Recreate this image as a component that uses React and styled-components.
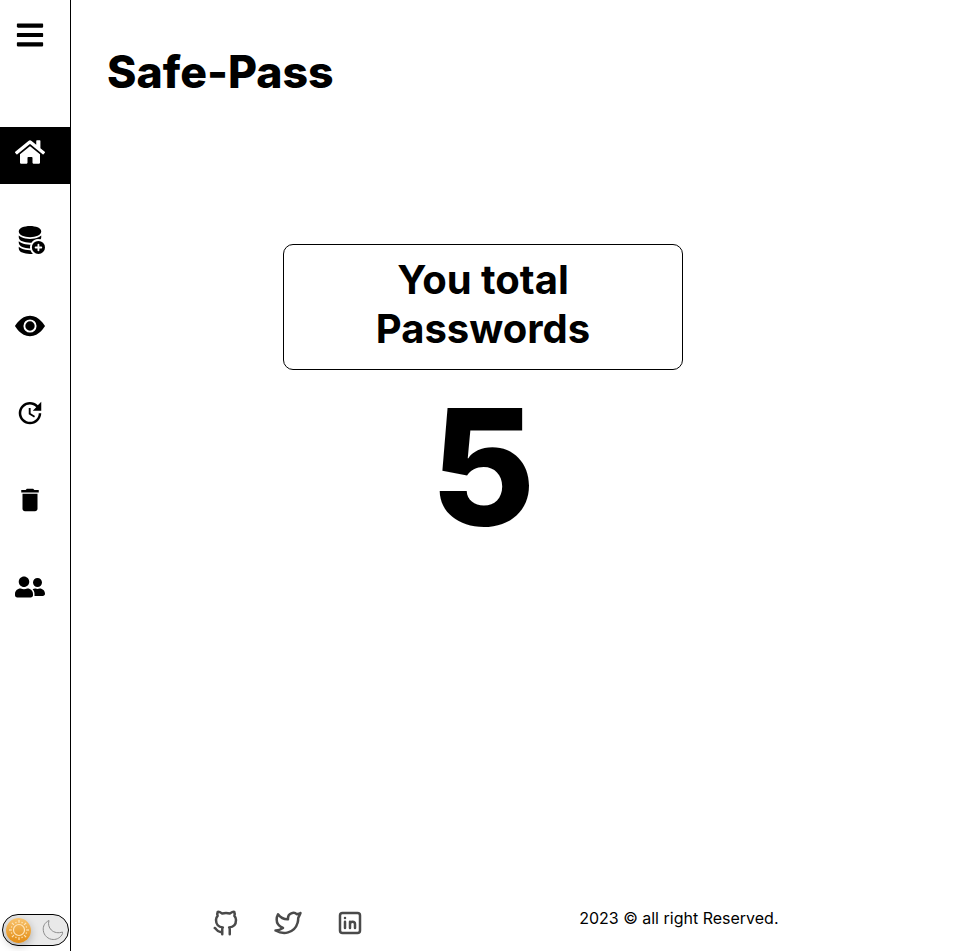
import React from "react";
import styled, { createGlobalStyle } from "styled-components";
import { FaBars, FaHome, FaUserFriends } from "react-icons/fa";
import { BsDatabaseFillAdd, BsEyeFill } from "react-icons/bs";
import { MdDelete, MdUpdate } from "react-icons/md";
import { TbBrandGithub, TbBrandTwitter } from "react-icons/tb";

const GlobalStyle = createGlobalStyle`
  * { box-sizing: border-box; margin: 0; padding: 0; }
  body { background: #fff; color: #000; font-family: Inter, sans-serif; overflow: hidden; }
`;

const Page = styled.div`
  display: flex;
  height: 100vh;
`;

const Sidebar = styled.aside`
  display: flex;
  flex-direction: column;
  flex: none;
  width: 71px;
  border-right: 1px solid #000;
`;

const MenuButton = styled.button`
  display: flex;
  width: 30px;
  height: 30px;
  margin: 20px 0 77px 15px;
  border: 0;
  background: none;
  color: inherit;
`;

const Nav = styled.nav`
  display: flex;
  flex-direction: column;
  gap: 30px;
`;

const NavItem = styled.a`
  display: flex;
  height: 57px;
  padding: 10px 15px;
  background: ${(p) => (p.$active ? "#000" : "transparent")};
  color: ${(p) => (p.$active ? "#fff" : "#000")};
`;

const ThemeToggle = styled.button`
  display: flex;
  align-items: center;
  justify-content: space-between;
  width: 67px;
  height: 32px;
  margin: auto 0 5px 2px;
  padding: 0 4px 0 3px;
  border: 1px solid #000;
  border-radius: 16px;
  background: #e9e9e9;
`;

const SunKnob = styled.span`
  display: flex;
  align-items: center;
  justify-content: center;
  width: 25px;
  height: 25px;
  border-radius: 50%;
  background: linear-gradient(180deg, #f8c36e, #e28c14);
  box-shadow: 0 3px 8px rgba(0, 0, 0, 0.28);
`;

const Main = styled.main`
  display: flex;
  flex-direction: column;
  flex: 1;
`;

const Title = styled.h1`
  margin: 45px 0 0 36px;
  font-size: 44.6px;
  font-weight: 800;
  line-height: 54px;
`;

const Summary = styled.section`
  display: flex;
  flex-direction: column;
  align-items: center;
  width: 400px;
  margin: 145px 0 0 212px;
`;

const SummaryCard = styled.h2`
  width: 400px;
  height: 126px;
  padding: 10px 80px;
  border: 1px solid #000;
  border-radius: 10px;
  font-size: 40px;
  font-weight: 700;
  line-height: 49px;
  text-align: center;
`;

const Count = styled.strong`
  font-size: 161px;
  font-weight: 800;
  line-height: 194px;
`;

const Footer = styled.footer`
  display: flex;
  justify-content: space-between;
  margin-top: auto;
  padding: 0 195.5px 13px 140px;
`;

const Socials = styled.div`
  display: flex;
  gap: 32px;
  color: #4a4a4a;
`;

const Copyright = styled.p`
  font-size: 16px;
  line-height: 20px;
`;

const navIcons = [FaHome, BsDatabaseFillAdd, BsEyeFill, MdUpdate, MdDelete, FaUserFriends];

const rays = Array.from({ length: 16 }, (_, i) => i * 22.5);

function Sun() {
  return (
    <svg width="22" height="22" viewBox="0 0 22 22" fill="none" stroke="#ffe6bd" strokeWidth="1.2">
      <circle cx="11" cy="11" r="5.5" />
      {rays.map((angle, i) => (
        <path key={angle} d={i % 2 ? "M11 3.6V2.4" : "M11 3.8V1"} transform={`rotate(${angle} 11 11)`} />
      ))}
    </svg>
  );
}

function Moon() {
  return (
    <svg width="22" height="22" viewBox="0 0 22 22" fill="none" stroke="#8c8c8c" strokeWidth="1">
      <path d="M7 1.5C2.8 3.5.8 7.1 1.3 11.4c.5 5 4.8 9 9.9 9.1 4 .1 7.6-2.1 9.3-5.8v-1.700c-4 1.400-8.300.8-11.200-2.000C6.800 8.500 5.900 5.300 7 1.500Z" />
    </svg>
  );
}

function LinkedinIcon() {
  return (
    <svg width="30" height="30" viewBox="0 0 24 24" fill="none" stroke="currentColor" strokeWidth="2" strokeLinecap="round" strokeLinejoin="round">
      <rect x="4" y="4" width="16" height="16" rx="2" />
      <path d="M8 11v5M8 8v.01M12 16v-5M16 16v-3a2 2 0 0 0-4 0" />
    </svg>
  );
}

export default function App() {
  return (
    <>
      <GlobalStyle />
      <Page>
        <Sidebar>
          <MenuButton aria-label="Menu"><FaBars size={30} /></MenuButton>
          <Nav>
            {navIcons.map((Icon, i) => (
              <NavItem key={i} $active={i === 0}><Icon size={30} /></NavItem>
            ))}
          </Nav>
          <ThemeToggle aria-label="Theme">
            <SunKnob><Sun /></SunKnob>
            <Moon />
          </ThemeToggle>
        </Sidebar>
        <Main>
          <Title>Safe-Pass</Title>
          <Summary>
            <SummaryCard>You total Passwords</SummaryCard>
            <Count>5</Count>
          </Summary>
          <Footer>
            <Socials>
              <TbBrandGithub size={30} />
              <TbBrandTwitter size={30} />
              <LinkedinIcon />
            </Socials>
            <Copyright>2023 © all right Reserved.</Copyright>
          </Footer>
        </Main>
      </Page>
    </>
  );
}
